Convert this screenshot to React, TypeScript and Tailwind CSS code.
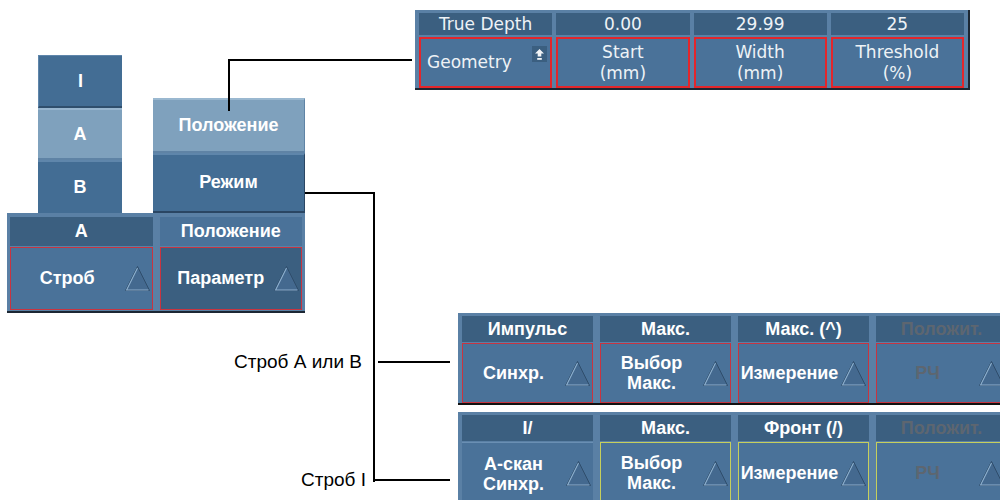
import React from "react"

const FRAME = "bg-[#5a80a5]"
const HEAD = "bg-[#3b5f80]"
const BODY = "bg-[#4a7299]"

const Tri = () => (
    <svg width="27" height="27" viewBox="0 0 27 27" className="shrink-0">
        <path d="M13.5 1.5 L25.5 25.5 H1.5 Z" fill="#44698f" stroke="#2f4d6b" strokeWidth="1" />
        <path d="M13.5 3 L2.6 25 H24.5" fill="none" stroke="#8db0cf" strokeWidth="1.1" />
    </svg>
)

const UpIcon = () => (
    <div className="absolute top-[7px] right-[3px] w-[15px] h-[16px] bg-[#3b5f80] flex items-center justify-center">
        <svg width="11" height="13" viewBox="0 0 11 13">
            <path d="M5.5 1 L10 5.5 H7.3 V8.5 H3.7 V5.5 H1 Z" fill="#f2f4f6" />
            <rect x="3.2" y="10" width="4.6" height="1.8" fill="#f2f4f6" />
        </svg>
    </div>
)

interface TopCol {
    head: string
    lines: string[]
    icon?: boolean
}

const TOP: TopCol[] = [
    { head: "True Depth", lines: ["Geometry"], icon: true },
    { head: "0.00", lines: ["Start", "(mm)"] },
    { head: "29.99", lines: ["Width", "(mm)"] },
    { head: "25", lines: ["Threshold", "(%)"] },
]

interface GateCell {
    head: string
    body: string[]
    border?: "red" | "yellow" | "none"
    dim?: boolean
}

const ROW_AB: GateCell[] = [
    { head: "Импульс", body: ["Синхр."], border: "red" },
    { head: "Макс.", body: ["Выбор", "Макс."], border: "red" },
    { head: "Макс. (^)", body: ["Измерение"], border: "red" },
    { head: "Положит.", body: ["РЧ"], border: "red", dim: true },
]

const ROW_I: GateCell[] = [
    { head: "I/", body: ["А-скан", "Синхр."], border: "none" },
    { head: "Макс.", body: ["Выбор", "Макс."], border: "yellow" },
    { head: "Фронт (/)", body: ["Измерение"], border: "yellow" },
    { head: "Положит.", body: ["РЧ"], border: "yellow", dim: true },
]

const Gate = ({ cell, bodyH }: { cell: GateCell; bodyH: string }) => {
    const border =
        cell.border === "red"
            ? "border-[1.5px] border-[#c83440]"
            : cell.border === "yellow"
            ? "border-[1.5px] border-[#c6cf5c]"
            : "border-t border-t-[#6a8fb3]"
    const txt = cell.dim ? "text-[#5d6670]" : "text-white"
    return (
        <div className="w-[131px] shrink-0 flex flex-col gap-[1px]">
            <div className={`h-[26px] ${HEAD} flex items-center justify-center text-[18px] font-bold leading-none ${txt}`}>
                {cell.head}
            </div>
            <div className={`${bodyH} ${BODY} ${border} flex items-center pr-[1px]`}>
                <div className={`flex-1 text-center text-[18px] font-bold leading-[20px] ${txt}`}>
                    {cell.body.map(l => (
                        <div key={l}>{l}</div>
                    ))}
                </div>
                <Tri />
            </div>
        </div>
    )
}

const Line = ({ className }: { className: string }) => <div className={`absolute bg-black ${className}`} />

export default function App() {
    return (
        <div className="relative w-[1000px] h-[500px] overflow-hidden bg-white font-['Liberation_Sans',Arial,sans-serif]">
            {/* верхняя панель (Geometry) */}
            <div className={`absolute left-[415px] top-[10px] w-[555px] h-[80px] ${FRAME} border-b-2 border-r-2 border-[#1c2733] grid grid-cols-4 gap-x-[4px] px-[4px] pt-[3px] font-['DejaVu_Sans',Verdana,sans-serif]`}>
                {TOP.map(col => (
                    <div key={col.head} className="flex flex-col gap-[2px]">
                        <div className={`h-[22px] ${HEAD} flex items-center justify-center text-[17px] leading-none text-[#eef2f6]`}>
                            {col.head}
                        </div>
                        <div className={`relative h-[51px] ${BODY} border-2 border-[#e3262b] flex items-center ${col.icon ? "justify-start pl-[6px]" : "justify-center"} text-[17px] leading-[21px] text-[#eef2f6]`}>
                            <div className="text-center">
                                {col.lines.map(l => (
                                    <div key={l}>{l}</div>
                                ))}
                            </div>
                            {col.icon && <UpIcon />}
                        </div>
                    </div>
                ))}
            </div>

            {/* I / A / B */}
            <div className="absolute left-[38px] top-[55px] w-[84px] flex flex-col text-[18px] font-bold text-white">
                <div className="h-[53px] bg-[#436d94] border-t border-l border-[#5f86ab] border-b-2 border-b-[#2f4e6c] flex items-center justify-center">I</div>
                <div className="h-[52px] bg-[#7fa1bd] border-t-2 border-t-[#98b6cf] border-b-2 border-b-[#5f83a5] flex items-center justify-center">A</div>
                <div className="h-[53px] bg-[#436d94] border-t-2 border-t-[#5f86ab] flex items-center justify-center">B</div>
            </div>

            {/* Положение / Режим */}
            <div className="absolute left-[153px] top-[98px] w-[152px] flex flex-col text-[18px] font-bold text-white">
                <div className="h-[55px] bg-[#7fa1bd] border-t-2 border-t-[#9ab8d0] border-b-2 border-b-[#5f83a5] border-r border-r-[#5f83a5] flex items-center justify-center">Положение</div>
                <div className="h-[60px] bg-[#436d94] border-t-2 border-t-[#5f86ab] border-b-2 border-b-[#2a4663] border-r border-r-[#2a4663] flex items-center justify-center pb-[2px]">Режим</div>
            </div>

            {/* нижняя левая панель */}
            <div className={`absolute left-[7px] top-[213px] w-[298px] h-[100px] ${FRAME} border-b-2 border-[#1c2733] grid grid-cols-2 gap-x-[7px] px-[3px] pt-[4px] text-[18px] font-bold text-white`}>
                <div className="flex flex-col gap-[1px]">
                    <div className={`h-[29px] ${HEAD} flex items-center justify-center`}>A</div>
                    <div className={`h-[63px] ${BODY} border-[1.5px] border-[#c83440] flex items-center pr-[1px]`}>
                        <div className="flex-1 text-center">Строб</div>
                        <Tri />
                    </div>
                </div>
                <div className="flex flex-col gap-[1px]">
                    <div className={`h-[29px] ${BODY} flex items-center justify-center`}>Положение</div>
                    <div className={`h-[63px] ${HEAD} border-[1.5px] border-[#c83440] flex items-center pr-[1px]`}>
                        <div className="flex-1 text-center pl-[8px]">Параметр</div>
                        <Tri />
                    </div>
                </div>
            </div>

            {/* строб А или В */}
            <div className={`absolute left-[458px] top-[313px] w-[580px] h-[92px] ${FRAME} border-b-2 border-[#111] flex gap-x-[7px] px-[4px] pt-[3px]`}>
                {ROW_AB.map(c => (
                    <Gate key={c.head} cell={c} bodyH="h-[60px]" />
                ))}
            </div>

            {/* строб I */}
            <div className={`absolute left-[458px] top-[412px] w-[580px] h-[100px] ${FRAME} flex gap-x-[7px] px-[4px] pt-[3px]`}>
                {ROW_I.map(c => (
                    <Gate key={c.head} cell={c} bodyH="h-[62px]" />
                ))}
            </div>

            {/* выноски */}
            <Line className="left-[228px] top-[59px] w-[2px] h-[52px]" />
            <Line className="left-[228px] top-[59px] w-[184px] h-[2px]" />
            <Line className="left-[305px] top-[192px] w-[70px] h-[2px]" />
            <Line className="left-[373px] top-[192px] w-[2px] h-[290px]" />
            <Line className="left-[373px] top-[479px] w-[77px] h-[2px]" />
            <Line className="left-[378px] top-[361px] w-[72px] h-[2px]" />

            <div className="absolute right-[638px] top-[350px] text-[19px] leading-[24px] text-black whitespace-nowrap">
                Строб А или В
            </div>
            <div className="absolute right-[634px] top-[468px] text-[19px] leading-[24px] text-black whitespace-nowrap">
                Строб I
            </div>
        </div>
    )
}
